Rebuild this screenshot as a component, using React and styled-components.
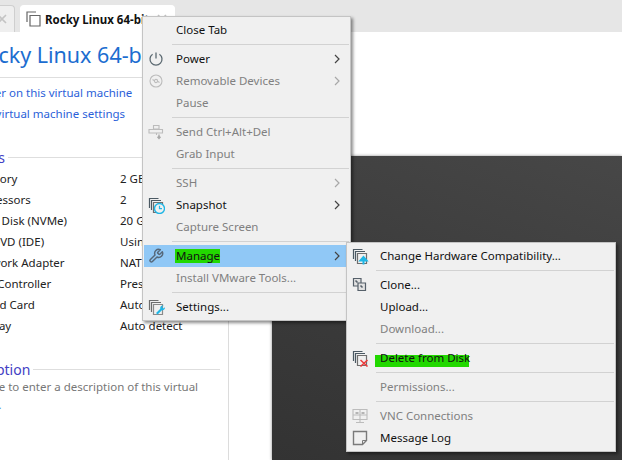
import React from 'react'
import styled, { createGlobalStyle } from 'styled-components'

const GlobalStyle = createGlobalStyle`
html, body {
  margin: 0;
  padding: 0;
  background: #fff;
}
body {
  font-family: "Noto Sans", "Open Sans", sans-serif;
  font-size: 11.5px;
  color: #222;
}
`

const Window = styled.div`
position: relative;
width: 622px;
height: 460px;
overflow: hidden;
display: flex;
flex-direction: column;
`
const TabBar = styled.div`
height: 32px;
flex: none;
display: flex;
align-items: flex-end;
gap: 5px;
background: #e6e6e6;
`
const Tab = styled.div`
height: 27px;
box-sizing: border-box;
display: flex;
align-items: center;
flex: none;
width: ${props => props.$width}px;
margin-left: ${props => props.$offset || 0}px;
padding: 0 6px 0 5px;
gap: 4px;
border: 1px solid ${props => props.$active ? '#fff' : '#cfcfcf'};
border-bottom: none;
border-radius: 4px 4px 0 0;
background: ${props => props.$active ? '#fff' : '#efefef'};
`
const TabTitle = styled.span`
flex: 1;
font-size: 11.5px;
font-weight: 700;
color: #111;
white-space: nowrap;
overflow: hidden;
`
const Body = styled.div`
flex: 1;
display: flex;
min-height: 0;
`
const SidePanel = styled.div`
flex: none;
width: 257px;
box-sizing: border-box;
margin-left: -28px;
padding-right: 8px;
border-right: 1px solid #dcdcdc;
`
const Title = styled.h1`
margin: 9px -8px 0 0;
padding-bottom: 8px;
font-size: 21.5px;
line-height: 28px;
font-weight: 400;
color: #1c6dd0;
white-space: nowrap;
border-bottom: 1px solid #dedede;
`
const Links = styled.div`
margin-top: 4px;
`
const ActionLink = styled.a`
display: block;
font-size: 11.5px;
line-height: 21px;
color: #2b5fd9;
white-space: nowrap;
`
const SectionHead = styled.div`
display: flex;
align-items: center;
gap: 3px;
height: 20px;
margin: ${props => props.$top}px 0 0 -17px;
font-size: 14px;
color: #4340c4;
&::after {
  content: "";
  flex: 1;
  height: 1px;
  background: #dedede;
}
`
const SpecRow = styled.div`
display: grid;
grid-template-columns: 148px 1fr;
height: 21px;
line-height: 21px;
font-size: 11.5px;
color: #222;
white-space: nowrap;
&:first-of-type {
  margin-top: 1px;
}
`
const Specs = styled.div``
const Description = styled.div`
margin: -1px 0 0 -20px;
font-size: 11.5px;
line-height: 18px;
color: #777;
white-space: nowrap;
`
const DescriptionTail = styled.div`
color: #5aa0e0;
`
const StageArea = styled.div`
flex: 1;
padding: 124px 0 0 43px;
display: flex;
`
const Stage = styled.div`
flex: 1;
background: linear-gradient(200deg, #474747 0%, #3a3a3a 60%, #333 100%);
box-shadow: 0 0 3px rgba(0, 0, 0, .45);
`
const Menu = styled.div`
position: absolute;
left: ${props => props.$left}px;
top: ${props => props.$top}px;
width: ${props => props.$width}px;
box-sizing: border-box;
padding: 2px 1px;
background: #f0f0f0;
border: 1px solid #c4c4c4;
box-shadow: 2px 2px 3px rgba(0, 0, 0, .45);
`
const Item = styled.div`
height: 22px;
display: flex;
align-items: center;
padding-left: 4px;
background: ${props => props.$active ? '#90c8f6' : 'transparent'};
color: ${props => props.$disabled ? '#808080' : '#111'};
`
const IconSlot = styled.span`
width: 28px;
height: 16px;
flex: none;
display: flex;
align-items: center;
`
const Label = styled.span`
position: relative;
flex: 1;
padding-bottom: 2px;
font-size: 11.5px;
white-space: nowrap;
`
const LabelText = styled.span`
position: relative;
`
const Marker = styled.span`
position: absolute;
left: ${props => props.$left}px;
top: ${props => props.$top}px;
width: ${props => props.$width}px;
height: ${props => props.$height}px;
background: #22d800;
`
const Chevron = styled.svg`
width: 6px;
height: 10px;
flex: none;
margin-right: 9px;
`
const Separator = styled.div`
height: 1px;
margin: 3px 0 3px 28px;
background: #d2d2d2;
`

const ink = '#4b5963'
const pale = '#bcbcbc'
const cyan = '#1fb6e6'

const Stacked = ({ color = ink, front = '#6f6f6f', children }) => (
    <svg width="17" height="17" viewBox="0 0 17 17" fill="none">
        <path d="M10.5 1.5H1.5V11" stroke={color} strokeWidth="1.2" />
        <path d="M3.5 13V3.5H13" stroke={color} strokeWidth="1.2" />
        <path d="M5.5 5.5H14.5V15.5H5.5Z" stroke={front} strokeWidth="1.2" />
        {children}
    </svg>
)

const icons = {
    power: (
        <svg width="16" height="16" viewBox="0 0 16 16" fill="none" stroke="#5c6a72" strokeWidth="1.3">
            <path d="M4.6 3.2a6 6 0 1 0 6.8 0" />
            <path d="M8 1.5V7.5" />
        </svg>
    ),
    disc: (
        <svg width="16" height="16" viewBox="0 0 16 16" fill="none" stroke={pale} strokeWidth="1.1">
            <circle cx="8" cy="8" r="6" />
            <circle cx="8" cy="8" r="1.6" />
            <path d="M4.5 6.5L6 7.5M10 8.5L11.5 9.5" />
        </svg>
    ),
    send: (
        <svg width="16" height="16" viewBox="0 0 16 16" fill="none" stroke={pale} strokeWidth="1.1">
            <path d="M5.5 1.5H11V5H5.5ZM1 5.5H14.5V9H1ZM8.5 9V11" />
            <path d="M11 10.5V14M9.5 12.8L11 14.5L12.5 12.8" stroke="#a8a8a8" strokeWidth="1.4" />
        </svg>
    ),
    snapshot: (
        <Stacked>
            <circle cx="11.5" cy="11.5" r="5" fill="#f0f0f0" stroke={cyan} strokeWidth="1.4" />
            <path d="M11.5 8.8V11.7H14" stroke={cyan} strokeWidth="1.2" />
        </Stacked>
    ),
    wrench: (
        <svg width="16" height="16" viewBox="0 0 24 24" fill="none" stroke="#56687a" strokeWidth="2.2" strokeLinejoin="round" strokeLinecap="round">
            <path d="M14.7 6.3a1 1 0 0 0 0 1.4l1.6 1.6a1 1 0 0 0 1.4 0l3.77-3.77a6 6 0 0 1-7.94 7.94l-6.91 6.91a2.12 2.12 0 0 1-3-3l6.91-6.91a6 6 0 0 1 7.94-7.94z" />
        </svg>
    ),
    settings: (
        <Stacked color="#6d6d6d" front="#8a8a8a">
            <path d="M15.5 6.5a2.6 2.6 0 0 0-3.2 3.2L8 14l1.6 1.6 4.3-4.3a2.6 2.6 0 0 0 3-3l-1.6 1.3-1.3-1.3z" fill={cyan} />
        </Stacked>
    ),
    upgrade: (
        <Stacked>
            <path d="M11.5 16.5V12M8.5 12.5L11.5 9L14.5 12.5Z" stroke={cyan} strokeWidth="2" fill={cyan} />
        </Stacked>
    ),
    clone: (
        <svg width="16" height="16" viewBox="0 0 16 16" fill="none" stroke="#56606a" strokeWidth="1.2">
            <path d="M1.5 1.5H9V9H1.5Z" fill="#e2e2e2" />
            <path d="M6 6H13.5V13.5H6Z" fill="#e2e2e2" />
            <path d="M3.5 3.5L5.5 5.5M8.5 8.5L10.5 10.5" strokeWidth="1.6" />
        </svg>
    ),
    remove: (
        <Stacked>
            <path d="M8.5 10L15.5 16.5M15.5 10L8.5 16.5" stroke="#ee3a3a" strokeWidth="1.5" />
        </Stacked>
    ),
    vnc: (
        <svg width="16" height="16" viewBox="0 0 16 16" fill="none" stroke={pale} strokeWidth="1.1">
            <path d="M1 1.5H15V11.5H1ZM1 7H15M8 1.5V14M4 14.5H12" />
            <path d="M3.5 5H6.5M12.5 5H9.5" stroke="#a0a0a0" strokeWidth="1.3" />
        </svg>
    ),
    log: (
        <svg width="16" height="16" viewBox="0 0 16 16" fill="none" stroke="#7a7a7a" strokeWidth="1.4">
            <path d="M1.5 1.5H14.5V10.5L10.5 14.5H1.5Z" />
            <path d="M10.5 14.5V10.5H14.5" strokeWidth="1" />
        </svg>
    ),
}

const contextItems = [
    { label: 'Close Tab' },
    null,
    { label: 'Power', icon: 'power', arrow: true },
    { label: 'Removable Devices', icon: 'disc', arrow: true, disabled: true },
    { label: 'Pause', disabled: true },
    null,
    { label: 'Send Ctrl+Alt+Del', icon: 'send', disabled: true },
    { label: 'Grab Input', disabled: true },
    null,
    { label: 'SSH', arrow: true, disabled: true },
    { label: 'Snapshot', icon: 'snapshot', arrow: true },
    { label: 'Capture Screen', disabled: true },
    null,
    { label: 'Manage', icon: 'wrench', arrow: true, active: true, mark: { left: -1, top: 1, width: 45, height: 14 } },
    { label: 'Install VMware Tools...', disabled: true },
    null,
    { label: 'Settings...', icon: 'settings' },
]

const manageItems = [
    { label: 'Change Hardware Compatibility...', icon: 'upgrade' },
    null,
    { label: 'Clone...', icon: 'clone' },
    { label: 'Upload...' },
    { label: 'Download...', disabled: true },
    null,
    { label: 'Delete from Disk', icon: 'remove', mark: { left: -5, top: 5, width: 94, height: 12 } },
    null,
    { label: 'Permissions...', disabled: true },
    null,
    { label: 'VNC Connections', icon: 'vnc', disabled: true },
    { label: 'Message Log', icon: 'log' },
]

const specs = [
    ['Memory', '2 GB'],
    ['Processors', '2'],
    ['Hard Disk (NVMe)', '20 GB'],
    ['CD/DVD (IDE)', 'Using file'],
    ['Network Adapter', 'NAT'],
    ['USB Controller', 'Present'],
    ['Sound Card', 'Auto detect'],
    ['Display', 'Auto detect'],
]

const CloseMark = ({ color }) => (
    <svg width="12" height="12" viewBox="0 0 12 12" fill="none" stroke={color} strokeWidth="1.6" style={{ flex: 'none' }}>
        <path d="M2 2L10 10M10 2L2 10" />
    </svg>
)

const PopupMenu = ({ items, left, top, width }) => (
    <Menu $left={left} $top={top} $width={width}>
        {items.map((item, index) => item ? (
            <Item key={item.label} $active={item.active} $disabled={item.disabled}>
                <IconSlot>{item.icon && icons[item.icon]}</IconSlot>
                <Label>
                    {item.mark && (
                        <Marker $left={item.mark.left} $top={item.mark.top} $width={item.mark.width} $height={item.mark.height} />
                    )}
                    <LabelText>{item.label}</LabelText>
                </Label>
                {item.arrow && (
                    <Chevron viewBox="0 0 6 10" fill="none" stroke={item.disabled ? '#a8a8a8' : '#444'} strokeWidth="1.2">
                        <path d="M1 1L5 5L1 9" />
                    </Chevron>
                )}
            </Item>
        ) : <Separator key={index} />)}
    </Menu>
)

const App = () => {
    return (
        <Window>
            <GlobalStyle />
            <TabBar>
                <Tab $width={40} $offset={-25}>
                    <TabTitle />
                    <CloseMark color="#c4c4c4" />
                </Tab>
                <Tab $width={155} $active>
                    <svg width="15" height="16" viewBox="0 0 15 16" fill="none" stroke="#666" strokeWidth="1.2" style={{ flex: 'none' }}>
                        <path d="M10 1H1V11" />
                        <path d="M4 4.5H14V15H4Z" />
                    </svg>
                    <TabTitle>Rocky Linux 64-bit</TabTitle>
                    <CloseMark color="#c4c4c4" />
                </Tab>
            </TabBar>
            <Body>
                <SidePanel>
                    <Title>Rocky Linux 64-bit</Title>
                    <Links>
                        <ActionLink>Power on this virtual machine</ActionLink>
                        <ActionLink>Edit virtual machine settings</ActionLink>
                    </Links>
                    <SectionHead $top={23}>Devices</SectionHead>
                    <Specs>
                        {specs.map(([name, value]) => (
                            <SpecRow key={name}>
                                <span>{name}</span>
                                <span>{value}</span>
                            </SpecRow>
                        ))}
                    </Specs>
                    <SectionHead $top={23}>Description</SectionHead>
                    <Description>
                        Type here to enter a description of this virtual
                        <DescriptionTail>machine.</DescriptionTail>
                    </Description>
                </SidePanel>
                <StageArea>
                    <Stage />
                </StageArea>
            </Body>
            <PopupMenu items={contextItems} left={142} top={16} width={209} />
            <PopupMenu items={manageItems} left={346} top={242} width={270} />
        </Window>
    )
}

export default App
